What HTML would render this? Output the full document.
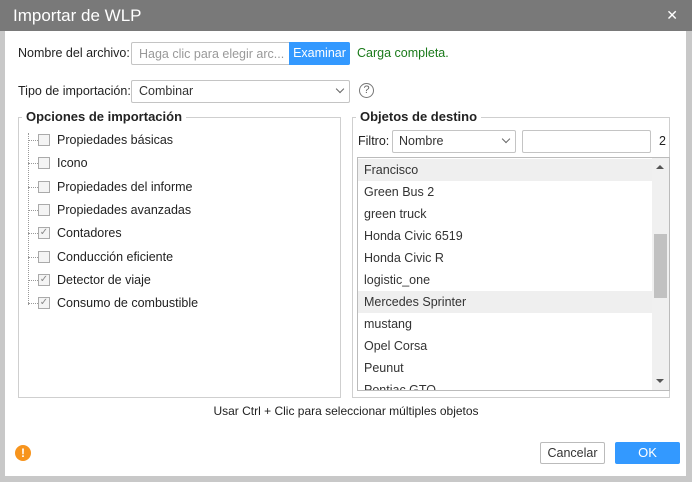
<!DOCTYPE html>
<html><head><meta charset="utf-8"><style>
*{box-sizing:border-box;margin:0;padding:0}
body{width:692px;height:482px;background:#c8c8c8;font-family:"Liberation Sans",sans-serif;font-size:12px;color:#222;position:relative;overflow:hidden}
.a{position:absolute}
.title{left:0;top:0;width:692px;height:31px;background:#797979;color:#fff;font-size:17px;padding:6px 0 0 13px}
.close{right:14px;top:7px;color:#fff;font-size:14px}
.body{left:5px;top:31px;width:681px;height:445px;background:#fff}
.inp{border:1px solid #c4c4c4;border-radius:2px;background:#fff;height:23px}
.fs{border:1px solid #cfcfcf}
.leg{background:#fff;font-weight:bold;font-size:13px;padding:0 4px}
.cb{width:12px;height:12px;border:1px solid #aaa;background:#f4f4f4}
.it{height:22px;line-height:22px;padding-left:6px;font-size:12.5px;color:#333;width:294px}
.arrow{width:6px;height:6px;border-right:1px solid #666;border-bottom:1px solid #666;transform:rotate(45deg)}
</style></head><body>
<div class="a title">Importar de WLP</div>
<div class="a close">✕</div>
<div class="a body"></div>

<div class="a" style="left:18px;top:46px;font-size:12.5px">Nombre del archivo:</div>
<div class="a inp" style="left:131px;top:42px;width:219px"></div>
<div class="a" style="left:139px;top:47px;color:#999;font-size:12.5px">Haga clic para elegir arc...</div>
<div class="a" style="left:289px;top:42px;width:61px;height:23px;background:#3399ff;color:#fff;font-size:12.5px;text-align:center;line-height:23px;border-radius:0 2px 2px 0">Examinar</div>
<div class="a" style="left:357px;top:46px;color:#1a7a1a;font-size:12.5px">Carga completa.</div>

<div class="a" style="left:18px;top:84px;font-size:12.5px">Tipo de importación:</div>
<div class="a inp" style="left:131px;top:80px;width:219px"></div>
<div class="a" style="left:139px;top:84px;font-size:12.5px;color:#333">Combinar</div>
<div class="a arrow" style="left:337px;top:86px"></div>
<div class="a" style="left:359px;top:83px;width:15px;height:15px;border:1px solid #777;border-radius:50%;font-size:11px;text-align:center;line-height:13px;color:#666">?</div>

<div class="a fs" style="left:18px;top:117px;width:323px;height:281px"></div>
<div class="a leg" style="left:22px;top:109px">Opciones de importación</div>
<div class="a" style="left:28px;top:133px;width:0;height:172px;border-left:1px dotted #999"></div>
<div class="a" style="left:28px;top:130px;width:300px">
 <div style="height:23px;position:relative"><span class="a" style="left:0;top:10px;width:10px;border-top:1px dotted #999"></span><span class="a cb" style="left:10px;top:4px"></span><span class="a" style="left:29px;top:3px;font-size:12.5px">Propiedades básicas</span></div>
 <div style="height:24px;position:relative"><span class="a" style="left:0;top:10px;width:10px;border-top:1px dotted #999"></span><span class="a cb" style="left:10px;top:4px"></span><span class="a" style="left:29px;top:3px;font-size:12.5px">Icono</span></div>
 <div style="height:23px;position:relative"><span class="a" style="left:0;top:10px;width:10px;border-top:1px dotted #999"></span><span class="a cb" style="left:10px;top:4px"></span><span class="a" style="left:29px;top:3px;font-size:12.5px">Propiedades del informe</span></div>
 <div style="height:23px;position:relative"><span class="a" style="left:0;top:10px;width:10px;border-top:1px dotted #999"></span><span class="a cb" style="left:10px;top:4px"></span><span class="a" style="left:29px;top:3px;font-size:12.5px">Propiedades avanzadas</span></div>
 <div style="height:24px;position:relative"><span class="a" style="left:0;top:10px;width:10px;border-top:1px dotted #999"></span><span class="a cb" style="left:10px;top:4px;font-size:10px;line-height:10px;color:#888;text-align:center">✓</span><span class="a" style="left:29px;top:3px;font-size:12.5px">Contadores</span></div>
 <div style="height:23px;position:relative"><span class="a" style="left:0;top:10px;width:10px;border-top:1px dotted #999"></span><span class="a cb" style="left:10px;top:4px"></span><span class="a" style="left:29px;top:3px;font-size:12.5px">Conducción eficiente</span></div>
 <div style="height:23px;position:relative"><span class="a" style="left:0;top:10px;width:10px;border-top:1px dotted #999"></span><span class="a cb" style="left:10px;top:4px;font-size:10px;line-height:10px;color:#888;text-align:center">✓</span><span class="a" style="left:29px;top:3px;font-size:12.5px">Detector de viaje</span></div>
 <div style="height:23px;position:relative"><span class="a" style="left:0;top:10px;width:10px;border-top:1px dotted #999"></span><span class="a cb" style="left:10px;top:4px;font-size:10px;line-height:10px;color:#888;text-align:center">✓</span><span class="a" style="left:29px;top:3px;font-size:12.5px">Consumo de combustible</span></div>
</div>

<div class="a fs" style="left:352px;top:117px;width:318px;height:281px"></div>
<div class="a leg" style="left:356px;top:109px">Objetos de destino</div>
<div class="a" style="left:358px;top:134px;font-size:12.5px">Filtro:</div>
<div class="a inp" style="left:392px;top:130px;width:124px"></div>
<div class="a" style="left:399px;top:134px;font-size:12.5px;color:#333">Nombre</div>
<div class="a arrow" style="left:503px;top:136px"></div>
<div class="a inp" style="left:522px;top:130px;width:129px"></div>
<div class="a" style="left:659px;top:134px;font-size:12.5px">2</div>

<div class="a" style="left:357px;top:157px;width:313px;height:234px;border:1px solid #bbb;overflow:hidden">
 <div class="it" style="background:#efefef;margin-top:1px">Francisco</div>
 <div class="it">Green Bus 2</div>
 <div class="it">green truck</div>
 <div class="it">Honda Civic 6519</div>
 <div class="it">Honda Civic R</div>
 <div class="it">logistic_one</div>
 <div class="it" style="background:#efefef">Mercedes Sprinter</div>
 <div class="it">mustang</div>
 <div class="it">Opel Corsa</div>
 <div class="it">Peunut</div>
 <div class="it">Pontiac GTO</div>
 <div class="a" style="left:294px;top:0;width:17px;height:232px;background:#f0f0f0"></div>
 <div class="a" style="left:296px;top:76px;width:13px;height:64px;background:#c1c1c1"></div>
 <div class="a" style="left:298px;top:7px;width:0;height:0;border:4px solid transparent;border-bottom:4px solid #555;border-top:0"></div>
 <div class="a" style="left:298px;top:221px;width:0;height:0;border:4px solid transparent;border-top:4px solid #555;border-bottom:0"></div>
</div>

<div class="a" style="left:0;width:692px;top:404px;text-align:center;font-size:12px">Usar Ctrl + Clic para seleccionar múltiples objetos</div>

<div class="a" style="left:15px;top:445px;width:16px;height:16px;border-radius:50%;background:#f7941d;color:#fff;font-weight:bold;font-size:12px;text-align:center;line-height:16px">!</div>
<div class="a" style="left:540px;top:442px;width:65px;height:22px;border:1px solid #bbb;border-radius:2px;text-align:center;line-height:20px;font-size:12.5px;color:#333">Cancelar</div>
<div class="a" style="left:615px;top:442px;width:65px;height:22px;background:#3399ff;border-radius:2px;text-align:center;line-height:22px;font-size:13px;color:#fff">OK</div>
</body></html>
